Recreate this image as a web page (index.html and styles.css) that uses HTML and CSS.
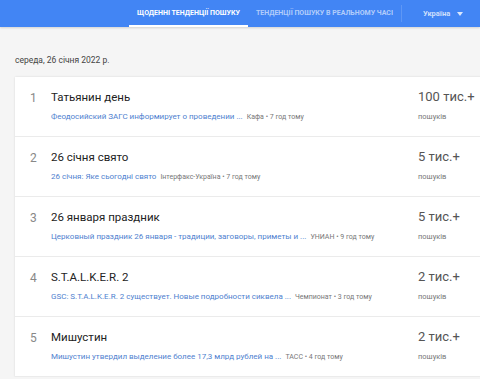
FILE: index.html
```html
<!DOCTYPE html>
<html lang="uk">
<head>
    <meta charset="UTF-8">
    <meta name="viewport" content="width=device-width, initial-scale=1.0">
    <title>Google Тренди</title>
    <link rel="stylesheet" href="styles.css">
</head>
<body>

    <header class="topbar">
        <nav class="tabs">
            <a class="tab active">Щоденні тенденції пошуку</a>
            <a class="tab">Тенденції пошуку в реальному часі</a>
        </nav>
        <div class="country">Україна <span class="caret"></span></div>
    </header>

    <main class="page">
        <div class="date">середа, 26 січня 2022 р.</div>

        <div class="card">
            <div class="row">
                <div class="rank">1</div>
                <div class="info">
                    <div class="title">Татьянин день</div>
                    <div class="meta"><span class="link">Феодосийский ЗАГС информирует о проведении ...</span> <span class="src">Кафа • 7 год тому</span></div>
                </div>
                <div class="count">
                    <div class="num">100 тис.+</div>
                    <div class="lbl">пошуків</div>
                </div>
            </div>

            <div class="row">
                <div class="rank">2</div>
                <div class="info">
                    <div class="title">26 січня свято</div>
                    <div class="meta"><span class="link">26 січня: Яке сьогодні свято</span> <span class="src">Інтерфакс-Україна • 7 год тому</span></div>
                </div>
                <div class="count">
                    <div class="num">5 тис.+</div>
                    <div class="lbl">пошуків</div>
                </div>
            </div>

            <div class="row">
                <div class="rank">3</div>
                <div class="info">
                    <div class="title">26 января праздник</div>
                    <div class="meta"><span class="link">Церковный праздник 26 января - традиции, заговоры, приметы и ...</span> <span class="src">УНИАН • 9 год тому</span></div>
                </div>
                <div class="count">
                    <div class="num">5 тис.+</div>
                    <div class="lbl">пошуків</div>
                </div>
            </div>

            <div class="row">
                <div class="rank">4</div>
                <div class="info">
                    <div class="title">S.T.A.L.K.E.R. 2</div>
                    <div class="meta"><span class="link">GSC: S.T.A.L.K.E.R. 2 существует. Новые подробности сиквела ...</span> <span class="src">Чемпионат • 3 год тому</span></div>
                </div>
                <div class="count">
                    <div class="num">2 тис.+</div>
                    <div class="lbl">пошуків</div>
                </div>
            </div>

            <div class="row">
                <div class="rank">5</div>
                <div class="info">
                    <div class="title">Мишустин</div>
                    <div class="meta"><span class="link">Мишустин утвердил выделение более 17,3 млрд рублей на ...</span> <span class="src">ТАСС • 4 год тому</span></div>
                </div>
                <div class="count">
                    <div class="num">2 тис.+</div>
                    <div class="lbl">пошуків</div>
                </div>
            </div>
        </div>
    </main>

</body>
</html>
```

FILE: styles.css
```css
body {
    margin: 0;
    font-family: Roboto, "Liberation Sans", Arial, sans-serif;
    background-color: #f5f5f5;
    overflow: hidden;
}

.topbar {
    height: 27px;
    background-color: #4285f4;
    display: flex;
    align-items: stretch;
    box-shadow: 0 1px 2px rgba(0,0,0,0.15);
}

.tabs {
    display: flex;
    margin-left: 129px;
}

.tab {
    display: flex;
    align-items: center;
    padding: 0 8px;
    font-size: 7px;
    font-weight: bold;
    text-transform: uppercase;
    color: rgba(255,255,255,0.6);
    border-bottom: 2px solid transparent;
    box-sizing: border-box;
    white-space: nowrap;
}

.tab.active {
    color: #fff;
    border-bottom-color: #fff;
}

.country {
    display: flex;
    align-items: center;
    margin: 5px 0;
    padding-left: 21px;
    border-left: 1px solid rgba(255,255,255,0.15);
    font-size: 7.5px;
    font-weight: bold;
    color: rgba(255,255,255,0.75);
}

.caret {
    margin-left: 7px;
    border-left: 3px solid transparent;
    border-right: 3px solid transparent;
    border-top: 4px solid rgba(255,255,255,0.8);
}

.page {
    padding: 28px 0 0 15px;
}

.date {
    font-size: 8.5px;
    color: #444;
    margin-bottom: 12px;
}

.card {
    background-color: #fff;
    width: 480px;
    box-shadow: 0 0 2px rgba(0,0,0,0.12);
}

.row {
    display: flex;
    height: 60px;
    border-bottom: 1px solid #ebebeb;
    box-sizing: border-box;
}

.rank {
    width: 36px;
    padding-top: 14px;
    padding-left: 15px;
    box-sizing: border-box;
    font-size: 12px;
    color: #888;
}

.info {
    flex: 1;
    padding-top: 13px;
    min-width: 0;
}

.title {
    font-size: 11.5px;
    color: #222;
}

.meta {
    margin-top: 8px;
    font-size: 8px;
    white-space: nowrap;
}

.link {
    color: #4f7fcf;
}

.src {
    color: #777;
    margin-left: 2px;
    font-size: 7px;
}

.count {
    width: 77px;
    padding-top: 12px;
}

.num {
    font-size: 13px;
    color: #555;
}

.lbl {
    margin-top: 8px;
    font-size: 7.5px;
    color: #777;
}
```
